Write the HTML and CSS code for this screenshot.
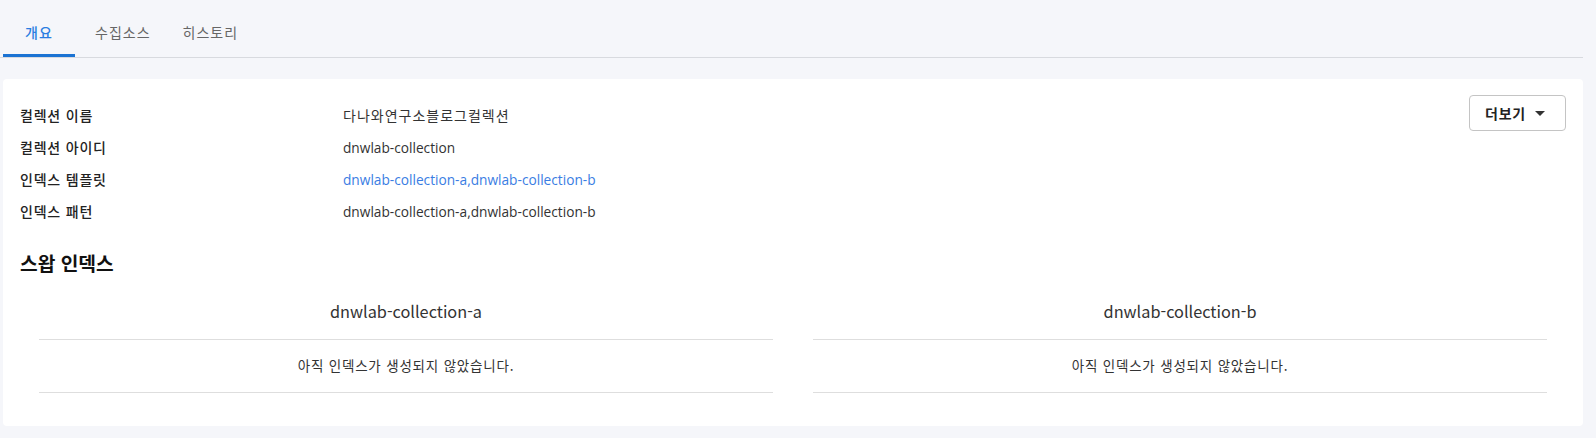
FILE: index.html
```html
<!DOCTYPE html>
<html lang="ko">
<head>
<meta charset="utf-8">
<title>컬렉션 개요</title>
<link rel="stylesheet" href="styles.css">
</head>
<body>
<nav class="tabs">
  <a class="tab active">개요</a>
  <a class="tab">수집소스</a>
  <a class="tab">히스토리</a>
</nav>
<section class="card">
  <div class="card-head">
    <dl class="info">
      <div class="row"><dt>컬렉션 이름</dt><dd>다나와연구소블로그컬렉션</dd></div>
      <div class="row"><dt>컬렉션 아이디</dt><dd class="latin">dnwlab-collection</dd></div>
      <div class="row"><dt>인덱스 템플릿</dt><dd class="latin link">dnwlab-collection-a,dnwlab-collection-b</dd></div>
      <div class="row"><dt>인덱스 패턴</dt><dd class="latin">dnwlab-collection-a,dnwlab-collection-b</dd></div>
    </dl>
    <button class="more">더보기<span class="caret"></span></button>
  </div>
  <h2 class="title">스왑 인덱스</h2>
  <div class="swap">
    <div class="idx">
      <div class="idx-head">dnwlab-collection-a</div>
      <div class="idx-body">아직 인덱스가 생성되지 않았습니다.</div>
    </div>
    <div class="idx">
      <div class="idx-head">dnwlab-collection-b</div>
      <div class="idx-body">아직 인덱스가 생성되지 않았습니다.</div>
    </div>
  </div>
</section>
</body>
</html>
```
FILE: styles.css
```css
* { box-sizing: border-box; }
html, body { margin: 0; padding: 0; }
body {
  background: #f5f6fa;
  font-family: "Noto Sans CJK KR", "Noto Sans", sans-serif;
  color: #222;
  width: 1596px;
  height: 438px;
  overflow: hidden;
}
.tabs {
  display: flex;
  height: 58px;
  padding-left: 3px;
  margin-right: 13px;
  border-bottom: 1px solid #d8dadf;
  align-items: stretch;
}
.tab {
  display: flex;
  align-items: center;
  justify-content: center;
  padding: 10px 16px 0;
  min-width: 72px;
  font-size: 14px;
  letter-spacing: 1px;
  color: #666;
  border-bottom: 3px solid transparent;
}
.tab:first-child { margin-right: 4px; }
.tab.active {
  color: #2a7de1;
  border-bottom-color: #1b73d3;
  font-weight: 500;
}
.card {
  margin: 21px 13px 0 3px;
  background: #fff;
  border-radius: 4px;
  padding: 16px 17px 17px;
  height: 347px;
}
.card-head {
  display: flex;
  justify-content: space-between;
  align-items: flex-start;
}
.info { margin: 4px 0 0; }
.row { display: flex; height: 32px; align-items: center; }
dt {
  width: 323px;
  font-size: 14px;
  letter-spacing: 0.8px;
  font-weight: 500;
  color: #222;
}
dd { margin: 0; font-size: 14px; letter-spacing: 1px; color: #333; }
.latin {
  font-family: "Open Sans", "Noto Sans CJK KR", sans-serif;
  font-size: 13.7px;
  letter-spacing: 0;
}
.link { color: #3a7de3; }
.more {
  display: flex;
  align-items: center;
  width: 97px;
  height: 36px;
  padding: 0 0 0 15px;
  background: #fff;
  border: 1px solid #c4c4c4;
  border-radius: 4px;
  font-family: "Noto Sans CJK KR", sans-serif;
  font-size: 14px;
  letter-spacing: 0.8px;
  font-weight: 700;
  color: #222;
}
.caret {
  margin-left: 9px;
  width: 0;
  height: 0;
  border-left: 5px solid transparent;
  border-right: 5px solid transparent;
  border-top: 5px solid #333;
}
.title {
  margin: 23px 0 0;
  font-size: 19.2px;
  line-height: 26px;
  font-weight: 700;
  color: #111;
}
.swap {
  display: flex;
  gap: 40px;
  margin: 6px 19px 0;
}
.idx { flex: 1; }
.idx-head {
  height: 58px;
  display: flex;
  align-items: center;
  justify-content: center;
  padding-top: 1px;
  font-size: 16.3px;
  color: #333;
  border-bottom: 1px solid #dedede;
}
.idx-body {
  height: 53px;
  display: flex;
  align-items: center;
  justify-content: center;
  font-size: 13.5px;
  letter-spacing: 0.8px;
  color: #333;
  border-bottom: 1px solid #dedede;
  padding-bottom: 3px;
}
```
